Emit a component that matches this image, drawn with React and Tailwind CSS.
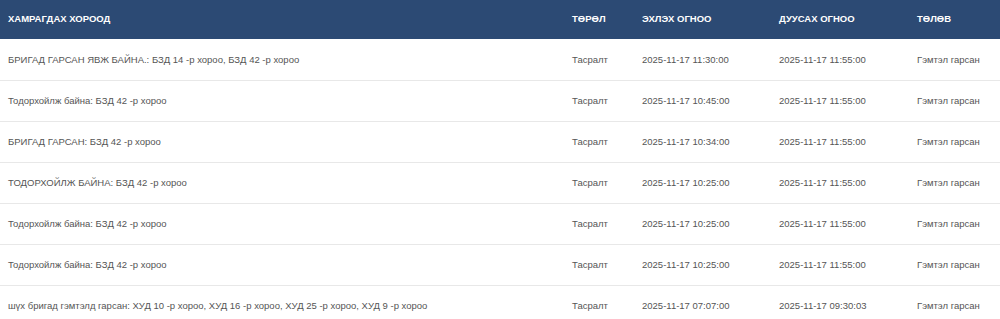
const rows = [
  ["БРИГАД ГАРСАН ЯВЖ БАЙНА.: БЗД 14 -р хороо, БЗД 42 -р хороо", "Тасралт", "2025-11-17 11:30:00", "2025-11-17 11:55:00", "Гэмтэл гарсан"],
  ["Тодорхойлж байна: БЗД 42 -р хороо", "Тасралт", "2025-11-17 10:45:00", "2025-11-17 11:55:00", "Гэмтэл гарсан"],
  ["БРИГАД ГАРСАН: БЗД 42 -р хороо", "Тасралт", "2025-11-17 10:34:00", "2025-11-17 11:55:00", "Гэмтэл гарсан"],
  ["ТОДОРХОЙЛЖ БАЙНА: БЗД 42 -р хороо", "Тасралт", "2025-11-17 10:25:00", "2025-11-17 11:55:00", "Гэмтэл гарсан"],
  ["Тодорхойлж байна: БЗД 42 -р хороо", "Тасралт", "2025-11-17 10:25:00", "2025-11-17 11:55:00", "Гэмтэл гарсан"],
  ["Тодорхойлж байна: БЗД 42 -р хороо", "Тасралт", "2025-11-17 10:25:00", "2025-11-17 11:55:00", "Гэмтэл гарсан"],
  ["шүх бригад гэмтэлд гарсан: ХУД 10 -р хороо, ХУД 16 -р хороо, ХУД 25 -р хороо, ХУД 9 -р хороо", "Тасралт", "2025-11-17 07:07:00", "2025-11-17 09:30:03", "Гэмтэл гарсан"],
];

const headers = ["ХАМРАГДАХ ХОРООД", "ТӨРӨЛ", "ЭХЛЭХ ОГНОО", "ДУУСАХ ОГНОО", "ТӨЛӨВ"];

const cols = "grid grid-cols-[564px_70px_137px_138px_1fr]";

export default function App() {
  return (
    <div className="h-[319px] w-[1000px] overflow-hidden bg-white font-['Liberation_Sans',Arial,sans-serif] text-[9.5px]">
      {/* header */}
      <div className={`${cols} h-[39px] items-center bg-[#2c4a74] font-bold text-white`}>
        {headers.map((h) => (
          <div key={h} className="px-2 whitespace-nowrap">
            {h}
          </div>
        ))}
      </div>

      {/* body rows */}
      <div className="pt-px">
        {rows.map((r, i) => (
          <div
            key={i}
            className={`${cols} h-[41px] items-center border-b border-[#e8e8e8] text-[#555555]`}
          >
            {r.map((cell, j) => (
              <div key={j} className="px-2 whitespace-nowrap">
                {cell}
              </div>
            ))}
          </div>
        ))}
      </div>
    </div>
  );
}
